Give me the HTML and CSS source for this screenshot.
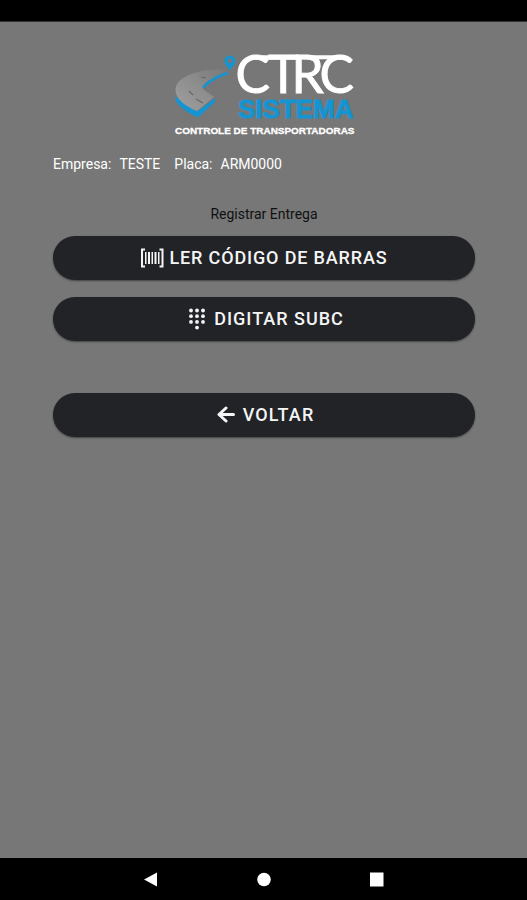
FILE: index.html
```html
<!DOCTYPE html>
<html lang="pt-BR">
<head>
    <meta charset="UTF-8">
    <meta name="viewport" content="width=device-width, initial-scale=1.0">
    <title>CTRC Sistema</title>
    <link rel="stylesheet" href="styles.css">
</head>
<body>
    <div class="status-bar"></div>

    <main class="container">
        <svg class="logo" viewBox="173 50 184 88">
            <defs>
                <linearGradient id="road" x1="0" y1="1" x2="1" y2="0">
                    <stop offset="0" stop-color="#a0a0a0"/>
                    <stop offset="0.5" stop-color="#8e8e8e"/>
                    <stop offset="1" stop-color="#797979"/>
                </linearGradient>
            </defs>
            <!-- road -->
            <path class="logo-blue" d="M175 97C176 105 184 111 198 117.500L215 102V98L198 111L180 99Z"/>
            <path fill="url(#road)" d="M227 70C210 68 185 72 177 84C172 94 180 104 197 111L214 97L203 89C202 83 209 79 227 73Z"/>
            <path class="logo-dash" d="M189 91l4 4M196 99l7 4M201 77l5 1"/>
            <path class="logo-route" d="M203 87.500C209 81 218 76 228 73"/>
            <!-- pin -->
            <path class="logo-blue" fill-rule="evenodd" d="M229.800 55.500a5.400 5.400 0 0 1 5.400 5.400c0 3.600-3.400 5.600-5.400 9.600c-2-4-5.400-6-5.400-9.600a5.400 5.400 0 0 1 5.400-5.400Zm0 3.100a2.300 2.300 0 1 0 0 4.600a2.300 2.300 0 0 0 0-4.600Z"/>
            <text class="logo-name" x="235.500 268 291.500 319.500" y="92.500">CTRC</text>
            <path class="logo-bar" d="M262 57.200H340"/>
            <text class="logo-system" x="238" y="117.500" textLength="115.500" lengthAdjust="spacingAndGlyphs">SISTEMA</text>
            <text class="logo-tagline" x="175" y="133.500" textLength="179.500" lengthAdjust="spacingAndGlyphs">CONTROLE DE TRANSPORTADORAS</text>
        </svg>

        <div class="info">
            <span class="label">Empresa:</span>
            <span class="company">TESTE</span>
            <span class="label">Placa:</span>
            <span>ARM0000</span>
        </div>

        <p class="title">Registrar Entrega</p>

        <button class="btn btn-read">
            <svg class="icon-barcode" viewBox="0 0 24 20">
                <path d="M5 1.500H2V18.500H5M19.500 1.500H22.500V18.500H19.500" fill="none" stroke="currentColor" stroke-width="2"/>
                <path d="M5 4h1.500v12H5zM8 4h2v12H8zM11.500 4h1.500v12h-1.500zM14.500 4h2v12h-2zM18 4H19.500v12h-1.500z" fill="currentColor"/>
            </svg>
            <span>LER CÓDIGO DE BARRAS</span>
        </button>

        <button class="btn btn-type">
            <svg class="icon-keypad" viewBox="0 0 18 22" fill="currentColor">
                <circle cx="3" cy="2.500" r="1.900"/><circle cx="9" cy="2.500" r="1.900"/><circle cx="15" cy="2.500" r="1.900"/>
                <circle cx="3" cy="8.200" r="1.900"/><circle cx="9" cy="8.200" r="1.900"/><circle cx="15" cy="8.200" r="1.900"/>
                <circle cx="3" cy="13.900" r="1.900"/><circle cx="9" cy="13.900" r="1.900"/><circle cx="15" cy="13.900" r="1.900"/>
                <circle cx="9" cy="19.600" r="1.900"/>
            </svg>
            <span>DIGITAR SUBC</span>
        </button>

        <button class="btn btn-back">
            <svg class="icon-arrow" viewBox="0 0 18 18">
                <path d="M9 2L2 8.500L9 15M2.500 8.500H16.500" fill="none" stroke="currentColor" stroke-width="3" stroke-linecap="round" stroke-linejoin="round"/>
            </svg>
            <span>VOLTAR</span>
        </button>
    </main>

    <nav class="nav-bar">
        <svg viewBox="0 0 16 16"><path d="M1 8.500L14 1.500V15.500Z"/></svg>
        <svg viewBox="0 0 16 16"><circle cx="8" cy="8.500" r="6.800"/></svg>
        <svg viewBox="0 0 16 16"><path d="M1 1.500H14.500V15.500H1Z"/></svg>
    </nav>
</body>
</html>
```

FILE: styles.css
```css
* {
    box-sizing: border-box;
}
body {
    font-family: Roboto, Arial, sans-serif;
    display: flex;
    flex-direction: column;
    height: 100vh;
    margin: 0;
    background-color: #777;
    color: #fff;
}
.status-bar {
    height: 22px;
    background-color: #000;
    border-bottom: 1px solid #333;
}
.container {
    flex: 1;
    display: flex;
    flex-direction: column;
    padding: 28px 52px 0 53px;
}
.logo {
    width: 184px;
    height: 88px;
    margin-left: 120px;
    overflow: visible;
}
.logo-blue {
    fill: #1594d2;
}
.logo-route {
    fill: none;
    stroke: #1594d2;
    stroke-width: 2.6;
}
.logo-dash {
    fill: none;
    stroke: #666;
    stroke-width: 1.2;
}
.logo-name {
    font: 51.5px Lato, sans-serif;
    fill: #fff;
    stroke: #fff;
    stroke-width: 0.9;
}
.logo-bar {
    stroke: #fff;
    stroke-width: 4;
}
.logo-system {
    font: bold 26px "Liberation Sans", Arial, sans-serif;
    fill: #1594d2;
    stroke: #1594d2;
    stroke-width: 0.9;
}
.logo-tagline {
    font: bold 9.5px "Liberation Sans", Arial, sans-serif;
    fill: #fff;
    stroke: #fff;
    stroke-width: 0.3;
}
.info {
    display: flex;
    height: 20px;
    margin-top: 16px;
    font-size: 14px;
    line-height: 20px;
}
.label {
    margin-right: 8px;
}
.company {
    margin-right: 14px;
}
.title {
    height: 20px;
    margin: 30px 0 12px;
    font-size: 14px;
    line-height: 20px;
    text-align: center;
    color: #111;
}
.btn {
    display: flex;
    align-items: center;
    justify-content: center;
    height: 44px;
    margin: 0 0 17px;
    padding: 0 0 1px;
    border: none;
    border-radius: 22px;
    background-color: #212327;
    box-shadow: 0 1px 2px rgba(0, 0, 0, 0.45);
    color: #f5f5f5;
    font-family: inherit;
    font-size: 18px;
    font-weight: 500;
    letter-spacing: 1px;
    cursor: pointer;
}
.btn span {
    line-height: 22px;
}
.btn-read {
    letter-spacing: 0.85px;
}
.btn-type {
    padding-left: 4px;
}
.btn-back {
    margin-top: 35px;
    padding-left: 3px;
    letter-spacing: 1.15px;
}
.icon-barcode {
    width: 24px;
    height: 20px;
    margin-right: 5px;
}
.icon-keypad {
    width: 18px;
    height: 22px;
    margin-right: 8px;
}
.icon-arrow {
    width: 18px;
    height: 18px;
    margin-right: 8px;
}
.nav-bar {
    display: flex;
    align-items: center;
    justify-content: space-between;
    height: 42px;
    padding: 0 142px 0 143px;
    background-color: #000;
}
.nav-bar svg {
    width: 16px;
    height: 16px;
    fill: #fff;
}
```
